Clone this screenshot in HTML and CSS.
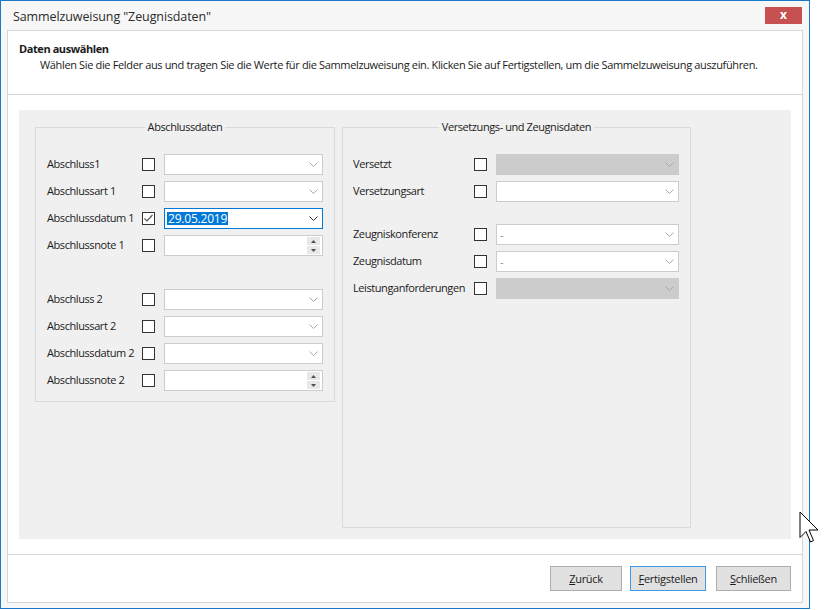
FILE: index.html
```html
<!DOCTYPE html>
<html lang="de">
<head>
<meta charset="utf-8">
<title>Sammelzuweisung</title>
<link rel="stylesheet" href="styles.css">
</head>
<body>
<div class="window">
  <div class="titlebar">
    <span class="title">Sammelzuweisung "Zeugnisdaten"</span>
    <div class="close">x</div>
  </div>
  <div class="inner">
    <div class="header">
      <div class="h-title">Daten auswählen</div>
      <div class="h-desc">Wählen Sie die Felder aus und tragen Sie die Werte für die Sammelzuweisung ein. Klicken Sie auf Fertigstellen, um die Sammelzuweisung auszuführen.</div>
    </div>
    <div class="content">
      <div class="panel">
        <div class="group group-left">
          <div class="legend"><span>Abschlussdaten</span></div>
          <div class="row"><span class="lbl lbl-l">Abschluss1</span><span class="cb"></span><div class="combo w-l"><span></span><svg class="chev" width="9" height="5" viewBox="0 0 9 5"><path d="M0.5 0.5 L4.5 4.5 L8.5 0.5" /></svg></div></div>
          <div class="row"><span class="lbl lbl-l">Abschlussart 1</span><span class="cb"></span><div class="combo w-l"><span></span><svg class="chev" width="9" height="5" viewBox="0 0 9 5"><path d="M0.5 0.5 L4.5 4.5 L8.5 0.5" /></svg></div></div>
          <div class="row"><span class="lbl lbl-l">Abschlussdatum 1</span><span class="cb"><svg width="11" height="11" viewBox="0 0 11 11"><path class="tick" d="M1.5 5.5 L4 8 L9.5 2" /></svg></span><div class="combo w-l focus"><span class="sel">29.05.2019</span><svg class="chev dark" width="9" height="5" viewBox="0 0 9 5"><path d="M0.5 0.5 L4.5 4.5 L8.5 0.5" /></svg></div></div>
          <div class="row"><span class="lbl lbl-l">Abschlussnote 1</span><span class="cb"></span><div class="combo w-l num"><span></span><div class="spin"><span class="sp"><svg width="5" height="3" viewBox="0 0 5 3"><path d="M0 3 L2.5 0 L5 3 Z" /></svg></span><span class="sp"><svg width="5" height="3" viewBox="0 0 5 3"><path d="M0 0 L2.5 3 L5 0 Z" /></svg></span></div></div></div>
          <div class="gap-l"></div>
          <div class="row"><span class="lbl lbl-l">Abschluss 2</span><span class="cb"></span><div class="combo w-l"><span></span><svg class="chev" width="9" height="5" viewBox="0 0 9 5"><path d="M0.5 0.5 L4.5 4.5 L8.5 0.5" /></svg></div></div>
          <div class="row"><span class="lbl lbl-l">Abschlussart 2</span><span class="cb"></span><div class="combo w-l"><span></span><svg class="chev" width="9" height="5" viewBox="0 0 9 5"><path d="M0.5 0.5 L4.5 4.5 L8.5 0.5" /></svg></div></div>
          <div class="row"><span class="lbl lbl-l">Abschlussdatum 2</span><span class="cb"></span><div class="combo w-l"><span></span><svg class="chev" width="9" height="5" viewBox="0 0 9 5"><path d="M0.5 0.5 L4.5 4.5 L8.5 0.5" /></svg></div></div>
          <div class="row"><span class="lbl lbl-l">Abschlussnote 2</span><span class="cb"></span><div class="combo w-l num"><span></span><div class="spin"><span class="sp"><svg width="5" height="3" viewBox="0 0 5 3"><path d="M0 3 L2.5 0 L5 3 Z" /></svg></span><span class="sp"><svg width="5" height="3" viewBox="0 0 5 3"><path d="M0 0 L2.5 3 L5 0 Z" /></svg></span></div></div></div>
        </div>
        <div class="group group-right">
          <div class="legend"><span>Versetzungs- und Zeugnisdaten</span></div>
          <div class="row"><span class="lbl lbl-r">Versetzt</span><span class="cb"></span><div class="combo w-r disabled"><span></span><svg class="chev" width="9" height="5" viewBox="0 0 9 5"><path d="M0.5 0.5 L4.5 4.5 L8.5 0.5" /></svg></div></div>
          <div class="row"><span class="lbl lbl-r">Versetzungsart</span><span class="cb"></span><div class="combo w-r"><span></span><svg class="chev" width="9" height="5" viewBox="0 0 9 5"><path d="M0.5 0.5 L4.5 4.5 L8.5 0.5" /></svg></div></div>
          <div class="gap-r"></div>
          <div class="row"><span class="lbl lbl-r">Zeugniskonferenz</span><span class="cb"></span><div class="combo w-r"><span class="dash">-</span><svg class="chev" width="9" height="5" viewBox="0 0 9 5"><path d="M0.5 0.5 L4.5 4.5 L8.5 0.5" /></svg></div></div>
          <div class="row"><span class="lbl lbl-r">Zeugnisdatum</span><span class="cb"></span><div class="combo w-r"><span class="dash">-</span><svg class="chev" width="9" height="5" viewBox="0 0 9 5"><path d="M0.5 0.5 L4.5 4.5 L8.5 0.5" /></svg></div></div>
          <div class="row"><span class="lbl lbl-r">Leistunganforderungen</span><span class="cb"></span><div class="combo w-r disabled"><span></span><svg class="chev" width="9" height="5" viewBox="0 0 9 5"><path d="M0.5 0.5 L4.5 4.5 L8.5 0.5" /></svg></div></div>
        </div>
      </div>
    </div>
    <div class="footer">
      <button class="btn b-back"><u>Z</u>urück</button>
      <button class="btn b-finish default"><u>F</u>ertigstellen</button>
      <button class="btn b-close"><u>S</u>chließen</button>
    </div>
  </div>
</div>
<svg class="cursor" width="22" height="33" viewBox="0 0 22 33"><path d="M1 1 L1 26.5 L7 20.5 L11.5 31 L14.5 29.5 L10 19 L19 19 Z" /></svg>
</body>
</html>
```

FILE: styles.css
```css
* { box-sizing: border-box; }

body {
  margin: 0;
  width: 832px;
  height: 610px;
  overflow: hidden;
  position: relative;
  background: #ffffff;
  font-family: "Open Sans", "Noto Sans", sans-serif;
  font-size: 11px;
  letter-spacing: -0.42px;
  color: #1b1b1b;
}

.window {
  width: 810px;
  height: 609px;
  border: 1px solid #1979ca;
  background: #f7f7f7;
  padding: 0 6px 5px;
  display: flex;
  flex-direction: column;
}

.titlebar {
  height: 29px;
  display: flex;
  align-items: flex-start;
  justify-content: space-between;
  padding-left: 6px;
}

.title {
  font-size: 12.5px;
  letter-spacing: -0.1px;
  line-height: 31px;
  color: #2b2b2b;
}

.close {
  width: 37px;
  height: 17px;
  margin-top: 6px;
  margin-right: 1px;
  background: #c75050;
  color: #ffffff;
  font-weight: bold;
  font-size: 12px;
  letter-spacing: 0;
  line-height: 15px;
  text-align: center;
}

.inner {
  flex: 1;
  border: 1px solid #d6d6d6;
  background: #ffffff;
  display: flex;
  flex-direction: column;
}

.header {
  height: 64px;
  border-bottom: 1px solid #d6d6d6;
  padding: 10px 11px 0;
  line-height: 16px;
}

.h-title {
  font-weight: bold;
}

.h-desc {
  padding-left: 21px;
  letter-spacing: -0.35px;
}

.content {
  height: 460px;
  padding: 15px 11px;
  border-bottom: 1px solid #d6d6d6;
}

.panel {
  height: 429px;
  background: #f0f0f0;
  display: flex;
  align-items: flex-start;
  gap: 7px;
  padding: 17px 16px;
}

.group {
  position: relative;
  border: 1px solid #dadada;
  padding-top: 26px;
}

.group-left {
  width: 300px;
  height: 275px;
  padding-left: 11px;
}

.group-right {
  width: 349px;
  height: 401px;
  padding-left: 10px;
}

.legend {
  position: absolute;
  top: -9px;
  left: 0;
  right: 0;
  text-align: center;
  line-height: 16px;
}

.legend span {
  background: #f0f0f0;
  padding: 0 3px;
}

.row {
  display: flex;
  align-items: center;
  height: 21px;
  margin-bottom: 6px;
}

.lbl {
  line-height: 19px;
  align-self: flex-start;
}

.lbl-l { width: 95px; }
.lbl-r { width: 121px; }

.gap-l { height: 27px; }
.gap-r { height: 16px; }

.cb {
  width: 13px;
  height: 13px;
  flex: none;
  border: 1px solid #333333;
  background: #ffffff;
  margin-right: 9px;
  display: flex;
}

.tick {
  fill: none;
  stroke: #555555;
  stroke-width: 1.2;
}

.combo {
  height: 21px;
  flex: none;
  border: 1px solid #cccccc;
  background: #ffffff;
  display: flex;
  align-items: center;
  justify-content: space-between;
  padding: 0 4px 0 2px;
}

.w-l { width: 159px; }
.w-r { width: 183px; }

.chev path {
  fill: none;
  stroke: #a8a8a8;
  stroke-width: 1;
}

.chev.dark path {
  stroke: #333333;
}

.combo.focus {
  border-color: #0078d7;
}

.sel {
  background: #0078d7;
  color: #ffffff;
  font-size: 12px;
  letter-spacing: -0.2px;
  line-height: 13px;
  padding: 0 1px;
}

.dash {
  color: #8a8a8a;
  padding-left: 1px;
}

.combo.disabled {
  background: #cccccc;
  border-color: #cccccc;
}

.combo.disabled .chev path {
  stroke: #a8a8a8;
}

.combo.num {
  padding-right: 2px;
}

.spin {
  display: flex;
  flex-direction: column;
  gap: 1px;
}

.sp {
  width: 13px;
  height: 8px;
  background: #e8e8e8;
  display: flex;
  align-items: center;
  justify-content: center;
}

.sp path {
  fill: #505050;
}

.footer {
  flex: 1;
  display: flex;
  justify-content: flex-end;
  align-items: flex-start;
  padding: 11px 11px 0 0;
}

.btn {
  height: 25px;
  border: 1px solid #adadad;
  background: #e1e1e1;
  font-family: "Open Sans", "Noto Sans", sans-serif;
  font-size: 11px;
  letter-spacing: -0.3px;
  color: #1b1b1b;
  padding: 0;
  margin: 0;
}

.b-back { width: 72px; }
.b-finish { width: 76px; margin-left: 8px; }
.b-close { width: 75px; margin-left: 10px; }

.btn.default {
  border-color: #3c9be8;
}

.cursor {
  position: absolute;
  left: 799px;
  top: 511px;
}

.cursor path {
  fill: #ffffff;
  stroke: #000000;
  stroke-width: 1;
}
```
